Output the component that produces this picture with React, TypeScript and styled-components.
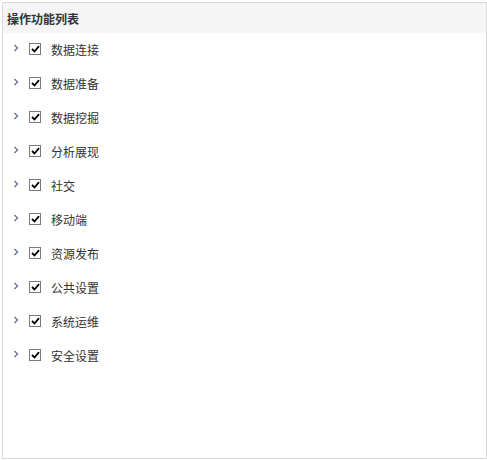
import React from "react";
import styled, { createGlobalStyle } from "styled-components";

const Global = createGlobalStyle`
  html, body { margin: 0; padding: 0; background: #fff; }
  body { font-family: "Noto Sans CJK SC", "Microsoft YaHei", sans-serif; }
`;

const Panel = styled.div`
  box-sizing: border-box;
  margin: 2px 0 0 2px;
  width: 485px;
  height: 457px;
  border: 1px solid #d9d9d9;
  background: #fff;
  display: flex;
  flex-direction: column;
`;

const Header = styled.div`
  height: 30px;
  background: #f5f5f5;
  display: flex;
  align-items: center;
  padding-left: 4px;
  font-size: 12px;
  font-weight: bold;
  color: #333;
`;

const List = styled.ul`
  list-style: none;
  margin: 0;
  padding: 0;
  display: flex;
  flex-direction: column;
`;

const Row = styled.li`
  height: 34px;
  display: flex;
  align-items: center;
  padding-left: 10px;
  font-size: 12px;
  color: #333;
`;

const Arrow = styled.span`
  width: 6px;
  height: 8px;
  display: flex;
  align-items: center;
  margin-right: 10px;
  margin-top: -4px;
  svg { display: block; }
`;

const Box = styled.span`
  box-sizing: border-box;
  width: 12px;
  height: 12px;
  border: 1px solid #7a7a7a;
  background: #fff;
  display: flex;
  align-items: center;
  justify-content: center;
  margin-right: 10px;
  margin-top: -2px;
`;

const Label = styled.span`
  line-height: 16px;
`;

const items = [
  "数据连接",
  "数据准备",
  "数据挖掘",
  "分析展现",
  "社交",
  "移动端",
  "资源发布",
  "公共设置",
  "系统运维",
  "安全设置",
];

export default function App() {
  return (
    <>
      <Global />
      <Panel>
        <Header>操作功能列表</Header>
        <List>
          {items.map((t) => (
            <Row key={t}>
              <Arrow>
                <svg width="6" height="8" viewBox="0 0 6 8">
                  <path d="M1.5 1 L4.5 4 L1.5 7" fill="none" stroke="#5a6b8c" strokeWidth="1.2" />
                </svg>
              </Arrow>
              <Box>
                <svg width="9" height="8" viewBox="0 0 9 8">
                  <path d="M1 4 L3.5 6.5 L8 1.2" fill="none" stroke="#000" strokeWidth="1.8" />
                </svg>
              </Box>
              <Label>{t}</Label>
            </Row>
          ))}
        </List>
      </Panel>
    </>
  );
}
